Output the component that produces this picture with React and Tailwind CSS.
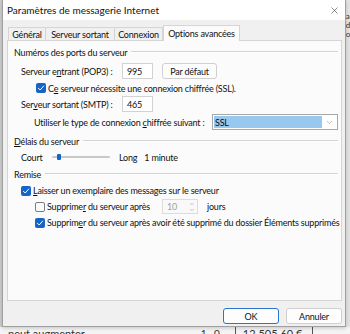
import { X, ChevronDown, ChevronUp } from "lucide-react";

function Check({ checked }) {
    if (checked) {
        return (
            <span className="flex h-[10px] w-[10px] shrink-0 items-center justify-center rounded-[2px] bg-[#1664c4]">
                <svg width="8" height="8" viewBox="0 0 8 8" fill="none">
                    <path d="M1.4 4.2 L3.2 6 L6.7 2" stroke="white" strokeWidth="1" strokeLinecap="round" strokeLinejoin="round" />
                </svg>
            </span>
        );
    }
    return <span className="h-[10px] w-[10px] shrink-0 rounded-[2px] border border-[#7d7d7d] bg-[#fbfbfb]" />;
}

function Header({ children }) {
    return (
        <div className="flex h-[12px] items-center gap-[4px] pl-[6px] pr-[3px]">
            <span>{children}</span>
            <span className="h-[2px] flex-1 border-t border-b border-t-[#d3d3d3] border-b-white" />
        </div>
    );
}

export default function App() {
    return (
        <div className="relative h-[334px] w-[350px] overflow-hidden whitespace-nowrap bg-[#e4e4e4] font-['Lato','Liberation_Sans',sans-serif] text-[9px] leading-none tracking-[-0.2px] text-[#111]">
            {/* application behind the dialog */}
            <div className="absolute bottom-0 left-0 right-0 flex h-[7px] items-start overflow-hidden bg-[#f4f4f4] text-[11px] leading-none tracking-normal text-[#333]">
                <span className="ml-[8px] mt-[1px]">peut augmenter</span>
                <span className="ml-[116px] mt-[1px] text-[10px]">1 . 0 .</span>
                <span className="ml-[10px] h-full border-l border-[#555]" />
                <span className="ml-[7px] mt-[1px]">12 505 60 €</span>
                <span className="ml-[10px] h-full border-l border-[#555]" />
            </div>
            <div className="absolute right-0 top-[12px] flex flex-col gap-[1px] text-[8px] text-[#333]">
                <span>a</span>
                <span>d</span>
                <span>o</span>
            </div>
            <div className="absolute left-0 top-0 h-[327px] w-[2px] bg-[#cfcfcf]" />

            {/* dialog window */}
            <div className="absolute left-[2px] top-0 flex h-[327px] w-[344px] flex-col border border-t-0 border-[#a0a0a0] bg-[#f0f0f0] shadow-[0_1px_4px_rgba(0,0,0,0.2)]">
                <div className="flex h-[20px] items-center justify-between bg-white pl-[4px] pr-[5px]">
                    <span className="text-[10px] tracking-normal">Paramètres de messagerie Internet</span>
                    <X size={11} strokeWidth={1.1} className="text-[#222]" />
                </div>

                <div className="flex flex-1 flex-col pl-[4px] pr-[3px]">
                    {/* tabs */}
                    <div className="flex h-[20px] items-end pl-[1px]">
                        <div className="flex h-[13px] w-[38px] items-center justify-center border border-b-0 border-[#d5d5d5] bg-[#f0f0f0]">Général</div>
                        <div className="flex h-[13px] w-[69px] items-center justify-center border border-b-0 border-l-0 border-[#d5d5d5] bg-[#f0f0f0]">Serveur sortant</div>
                        <div className="flex h-[13px] w-[48px] items-center justify-center border border-b-0 border-l-0 border-[#d5d5d5] bg-[#f0f0f0]">Connexion</div>
                        <div className="relative z-10 -mb-px flex h-[16px] w-[77px] items-center justify-center border border-b-0 border-[#d5d5d5] bg-[#fbfbfb] pb-[1px]">Options avancées</div>
                    </div>

                    {/* panel */}
                    <div className="flex h-[261px] flex-col border border-[#d5d5d5] bg-[#fbfbfb] pt-[5px]">
                        <Header>Numéros des ports du serveur</Header>

                        <div className="mt-[5px] flex h-[16px] items-center pl-[13px]">
                            <span className="w-[101px]">Serveur e<u>n</u>trant (POP3) :</span>
                            <span className="flex h-[16px] w-[31px] items-center border border-[#d2d2d2] bg-white pl-[4px]">995</span>
                            <span className="ml-[9px] flex h-[16px] w-[55px] items-center justify-center rounded-[3px] border border-[#d0d0d0] bg-[#fdfdfd]">Par défaut</span>
                        </div>
                        <div className="mt-[1px] flex h-[16px] items-center gap-[2px] pl-[28px]">
                            <Check checked />
                            <span>C<u>e</u> serveur nécessite une connexion chiffrée (SSL).</span>
                        </div>
                        <div className="flex h-[16px] items-center pl-[13px]">
                            <span className="w-[101px]">Ser<u>v</u>eur sortant (SMTP) :</span>
                            <span className="flex h-[16px] w-[31px] items-center border border-[#d2d2d2] bg-white pl-[4px]">465</span>
                        </div>
                        <div className="mt-[2px] flex h-[16px] items-center pl-[26px]">
                            <span className="w-[178px]">Utiliser le type de connexion <u>c</u>hiffrée suivant :</span>
                            <span className="flex h-[16px] w-[126px] items-center border border-[#a8a8a8] bg-white p-[1px]">
                                <span className="flex h-full flex-1 items-center bg-[#99c8ee] pl-[1px] text-[#0c0c0c]">SSL</span>
                                <span className="flex w-[14px] items-center justify-center">
                                    <ChevronDown size={9} strokeWidth={1.1} className="text-[#666]" />
                                </span>
                            </span>
                        </div>

                        <div className="mt-[5px]">
                            <Header><u>D</u>élais du serveur</Header>
                        </div>
                        <div className="mt-[2px] flex h-[16px] items-center pl-[13px]">
                            <span className="w-[31px]">Court</span>
                            <span className="relative flex h-[16px] w-[58px] items-center">
                                <span className="h-[2px] w-full rounded-full bg-[#c8c8c8]" />
                                <span className="absolute left-[5px] top-[5px] h-[6px] w-[4px] rounded-[1px] bg-[#1664c4]" />
                            </span>
                            <span className="ml-[9px]">Long</span>
                            <span className="ml-[7px]">1 minute</span>
                        </div>

                        <div className="mt-[3px]">
                            <Header>Remise</Header>
                        </div>
                        <div className="mt-[3px] flex h-[15px] items-center gap-[2px] pl-[13px]">
                            <Check checked />
                            <span><u>L</u>aisser un exemplaire des messages sur le serveur</span>
                        </div>
                        <div className="mt-[1px] flex h-[15px] items-center pl-[27px]">
                            <Check />
                            <span className="ml-[2px] w-[115px]">Supprime<u>r</u> du serveur après</span>
                            <span className="flex h-[15px] w-[36px] items-center justify-between border border-[#dcdcdc] bg-[#f9f9f9] pl-[4px] text-[#a0a0a0]">
                                10
                                <span className="flex h-full w-[10px] flex-col items-center justify-center text-[#808080]">
                                    <ChevronUp size={6} strokeWidth={1.8} />
                                    <ChevronDown size={6} strokeWidth={1.8} />
                                </span>
                            </span>
                            <span className="ml-[9px]">jours</span>
                        </div>
                        <div className="mt-[1px] flex h-[15px] items-center gap-[2px] pl-[27px]">
                            <Check checked />
                            <span>Supprim<u>e</u>r du serveur après avoir été supprimé du dossier Éléments supprimés</span>
                        </div>
                    </div>

                    {/* buttons */}
                    <div className="mt-[7px] flex justify-end gap-[7px]">
                        <span className="flex h-[16px] w-[56px] items-center justify-center rounded-[3px] border border-[#2a74cf] bg-[#fdfdfd]">OK</span>
                        <span className="flex h-[16px] w-[56px] items-center justify-center rounded-[3px] border border-[#cfcfcf] bg-[#fdfdfd]">Annuler</span>
                    </div>
                </div>
            </div>
        </div>
    );
}
